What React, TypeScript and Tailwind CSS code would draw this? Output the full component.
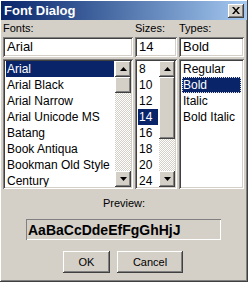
import React from "react";

const fonts = [
  "Arial",
  "Arial Black",
  "Arial Narrow",
  "Arial Unicode MS",
  "Batang",
  "Book Antiqua",
  "Bookman Old Style",
  "Century",
];
const sizes = ["8", "10", "12", "14", "16", "18", "20", "24"];
const types = ["Regular", "Bold", "Italic", "Bold Italic"];

const sunken =
  "shadow-[inset_1px_1px_0_#808080,inset_-1px_-1px_0_#ffffff,inset_2px_2px_0_#404040,inset_-2px_-2px_0_#d4d0c8]";
const raised =
  "shadow-[inset_-1px_-1px_0_#404040,inset_1px_1px_0_#ffffff,inset_-2px_-2px_0_#808080,inset_2px_2px_0_#d4d0c8]";

function Arrow({ down }: { down?: boolean }) {
  return (
    <div className={`w-[16px] h-[16px] shrink-0 bg-[#d4d0c8] flex items-center justify-center ${raised}`}>
      <svg width="7" height="4" viewBox="0 0 7 4">
        <path d={down ? "M0 0h7L3.5 4z" : "M3.5 0L7 4H0z"} fill="#000" />
      </svg>
    </div>
  );
}

function ScrollBar({ thumb }: { thumb: string }) {
  return (
    <div className="w-[16px] flex flex-col bg-[repeating-conic-gradient(#d4d0c8_0_25%,#ffffff_0_50%)] bg-[length:2px_2px]">
      <Arrow />
      <div className={`${thumb} w-[16px] bg-[#d4d0c8] ${raised}`} />
      <div className="flex-1" />
      <Arrow down />
    </div>
  );
}

function ListBox({
  items,
  selected,
  focus,
  thumb,
}: {
  items: string[];
  selected: number;
  focus?: boolean;
  thumb?: string;
}) {
  return (
    <div className={`h-[130px] bg-white p-[2px] flex text-[12px] ${sunken}`}>
      <div className="flex-1 min-w-0 overflow-hidden px-[1px]">
        {items.map((item, i) => (
          <div
            key={item}
            className={`h-[16px] leading-[16px] pl-[1px] whitespace-nowrap ${
              i === selected ? "bg-[#0a246a] text-white" : "text-black"
            } ${i === selected && focus ? "outline-1 outline-dotted outline-[#e8e4dc] -outline-offset-1" : ""}`}
          >
            {item}
          </div>
        ))}
      </div>
      {thumb && <ScrollBar thumb={thumb} />}
    </div>
  );
}

function TextBox({ value }: { value: string }) {
  return (
    <div className={`h-[20px] bg-white px-[4px] text-[13px] leading-[20px] text-black ${sunken}`}>
      {value}
    </div>
  );
}

export default function App() {
  return (
    <div className="w-[248px] h-[282px] bg-[#d4d0c8] flex flex-col text-[11px] text-black font-['Liberation_Sans',Arial,sans-serif] shadow-[inset_-1px_-1px_0_#404040,inset_1px_1px_0_#ffffff,inset_-2px_-2px_0_#808080] p-[1px] pb-[3px]">
      {/* Title bar */}
      <div className="h-[19px] flex items-center justify-between px-[3px] bg-gradient-to-r from-[#0a246a] to-[#a6caf0]">
        <span className="text-white font-bold text-[13px] leading-none">Font Dialog</span>
        <div className={`w-[16px] h-[14px] bg-[#d4d0c8] flex items-center justify-center ${raised}`}>
          <svg width="8" height="7" viewBox="0 0 8 7">
            <path d="M0 0h2l2 2.5L6 0h2L5 3.5 8 7H6L4 4.5 2 7H0l3-3.5z" fill="#000" />
          </svg>
        </div>
      </div>

      {/* Pickers */}
      <div className="grid grid-cols-[130px_42px_65px] gap-x-[2px] px-[2px] mt-[1px]">
        <div className="h-[14px] leading-[14px]">Fonts:</div>
        <div className="h-[14px] leading-[14px]">Sizes:</div>
        <div className="h-[14px] leading-[14px]">Types:</div>

        <div className="mt-[2px]"><TextBox value="Arial" /></div>
        <div className="mt-[2px]"><TextBox value="14" /></div>
        <div className="mt-[2px]"><TextBox value="Bold" /></div>

        <div className="mt-[2px]">
          <ListBox items={fonts} selected={0} thumb="h-[16px]" />
        </div>
        <div className="mt-[2px]">
          <ListBox items={sizes} selected={3} thumb="h-[62px]" />
        </div>
        <div className="mt-[2px]">
          <ListBox items={types} selected={1} focus />
        </div>
      </div>

      {/* Preview */}
      <div className="text-center mt-[7px] h-[14px] leading-[14px]">Preview:</div>
      <div className="mt-[9px] ml-[25px] w-[195px] h-[21px] pl-[2px] flex items-center shadow-[inset_1px_1px_0_#808080,inset_-1px_-1px_0_#ffffff]">
        <span className="font-bold text-[14px] leading-none">AaBaCcDdeEfFgGhHjJ</span>
      </div>

      {/* Buttons */}
      <div className="flex gap-[7px] mt-[11px] pl-[62px]">
        <button className={`w-[47px] h-[22px] bg-[#d4d0c8] text-[11px] ${raised}`}>OK</button>
        <button className={`w-[66px] h-[22px] bg-[#d4d0c8] text-[11px] ${raised}`}>Cancel</button>
      </div>
    </div>
  );
}
